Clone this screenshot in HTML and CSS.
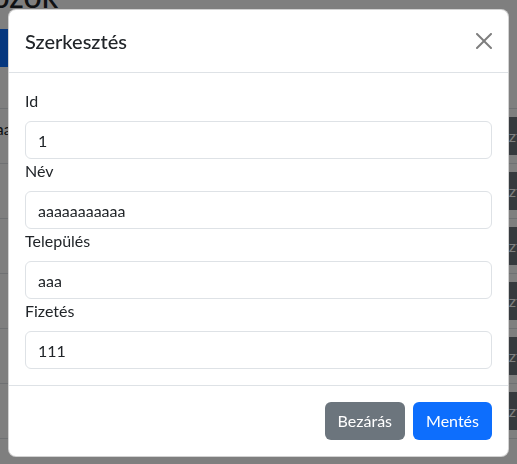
FILE: index.html
```html
<!DOCTYPE html>
<html lang="hu">
<head>
<meta charset="utf-8">
<title>Dolgozók</title>
<link rel="stylesheet" href="styles.css">
</head>
<body>
<div class="page">
  <h1 class="title">Dolgozók</h1>
  <button class="pbtn pbtn-primary">Új</button>
  <table class="tbl">
    <thead>
      <tr><th class="c-id">Id</th><th class="c-name">Név</th><th class="c-town">Település</th><th class="c-pay">Fizetés</th><th class="c-act"></th></tr>
    </thead>
    <tbody>
      <tr><td>1</td><td>aaaaaaaaaaa</td><td>aaa</td><td>111</td><td><button class="pbtn pbtn-sec">Szerkesztés</button></td></tr>
      <tr><td>2</td><td>Béla</td><td>Pécs</td><td>350000</td><td><button class="pbtn pbtn-sec">Szerkesztés</button></td></tr>
      <tr><td>3</td><td>Éva</td><td>Győr</td><td>420000</td><td><button class="pbtn pbtn-sec">Szerkesztés</button></td></tr>
      <tr><td>4</td><td>Kati</td><td>Szeged</td><td>390000</td><td><button class="pbtn pbtn-sec">Szerkesztés</button></td></tr>
      <tr><td>5</td><td>Dóra</td><td>Eger</td><td>310000</td><td><button class="pbtn pbtn-sec">Szerkesztés</button></td></tr>
      <tr><td>6</td><td>Ádám</td><td>Vác</td><td>280000</td><td><button class="pbtn pbtn-sec">Szerkesztés</button></td></tr>
    </tbody>
  </table>
</div>

<div class="backdrop"></div>

<div class="modal">
  <div class="modal-content">
    <div class="modal-header">
      <h5 class="modal-title">Szerkesztés</h5>
      <button class="btn-close" aria-label="Close">
        <svg viewBox="0 0 16 16" width="16" height="16"><path d="M.293.293a1 1 0 0 1 1.414 0L8 6.586 14.293.293a1 1 0 1 1 1.414 1.414L9.414 8l6.293 6.293a1 1 0 0 1-1.414 1.414L8 9.414l-6.293 6.293a1 1 0 0 1-1.414-1.414L6.586 8 .293 1.707a1 1 0 0 1 0-1.414z"/></svg>
      </button>
    </div>
    <div class="modal-body">
      <label class="form-label">Id</label>
      <input class="form-control" value="1">
      <label class="form-label">Név</label>
      <input class="form-control" value="aaaaaaaaaaa">
      <label class="form-label">Település</label>
      <input class="form-control" value="aaa">
      <label class="form-label">Fizetés</label>
      <input class="form-control" value="111">
    </div>
    <div class="modal-footer">
      <button class="btn btn-secondary">Bezárás</button>
      <button class="btn btn-primary">Mentés</button>
    </div>
  </div>
</div>
</body>
</html>
```

FILE: styles.css
```css
* { box-sizing: border-box; }
html, body { margin: 0; padding: 0; }
body {
  font-family: Lato, "Liberation Sans", sans-serif;
  font-size: 16px;
  line-height: 1.5;
  color: #212529;
  background: #fff;
  overflow: hidden;
}

/* page behind the modal */
.page {
  margin-left: -100px;
  width: 720px;
}
.title {
  font-size: 32px;
  font-weight: 500;
  line-height: 40px;
  height: 40px;
  margin: -24px 0 0 25px;
}
.pbtn {
  font: inherit;
  border: 1px solid transparent;
  border-radius: 6px;
  padding: 6px 12px;
  color: #fff;
  line-height: 1.5;
  height: 38px;
  white-space: nowrap;
}
.pbtn-primary {
  display: block;
  background: #0d6efd;
  margin: 13px 0 1px 0;
  width: 150px;
  text-align: left;
}
.pbtn-sec { background: #6c757d; }
.tbl {
  border-collapse: collapse;
  width: 720px;
  table-layout: fixed;
}
.tbl th, .tbl td {
  text-align: left;
  padding: 8px;
  border-bottom: 1px solid #dee2e6;
  vertical-align: top;
  white-space: nowrap;
  overflow: hidden;
}
.c-id { width: 40px; }
.c-name { width: 150px; }
.c-town { width: 150px; }
.c-pay { width: 195px; }

/* overlay */
.backdrop {
  position: fixed;
  inset: 0;
  background: rgba(0, 0, 0, 0.5);
}
.modal {
  position: fixed;
  inset: 0;
  padding: 9px 8px 8px 8px;
}
.modal-content {
  background: #fff;
  border: 1px solid rgba(0, 0, 0, 0.175);
  border-radius: 8px;
  display: flex;
  flex-direction: column;
}
.modal-header {
  display: flex;
  align-items: center;
  padding: 16px;
  border-bottom: 1px solid #dee2e6;
}
.modal-title {
  margin: 0;
  font-size: 20px;
  font-weight: 500;
  line-height: 1.5;
}
.btn-close {
  margin: -8px -8px -8px auto;
  padding: 8px;
  width: 32px;
  height: 32px;
  border: 0;
  background: transparent;
  opacity: 0.5;
  display: flex;
  align-items: center;
  justify-content: center;
}
.btn-close svg { display: block; fill: #000; }
.modal-body {
  padding: 16px;
  display: flex;
  flex-direction: column;
}
.form-label {
  margin-bottom: 8px;
  display: block;
}
.form-control {
  display: block;
  width: 100%;
  font: inherit;
  color: #212529;
  padding: 6px 12px;
  line-height: 1.5;
  border: 1px solid #dee2e6;
  border-radius: 6px;
  background: #fff;
  height: 38px;
}
.modal-footer {
  display: flex;
  justify-content: flex-end;
  align-items: center;
  padding: 12px;
  border-top: 1px solid #dee2e6;
}
.btn {
  font: inherit;
  line-height: 1.5;
  padding: 6px 12px;
  margin: 4px;
  border: 1px solid transparent;
  border-radius: 6px;
  color: #fff;
  height: 38px;
}
.btn-secondary { background: #6c757d; }
.btn-primary { background: #0d6efd; }
```
